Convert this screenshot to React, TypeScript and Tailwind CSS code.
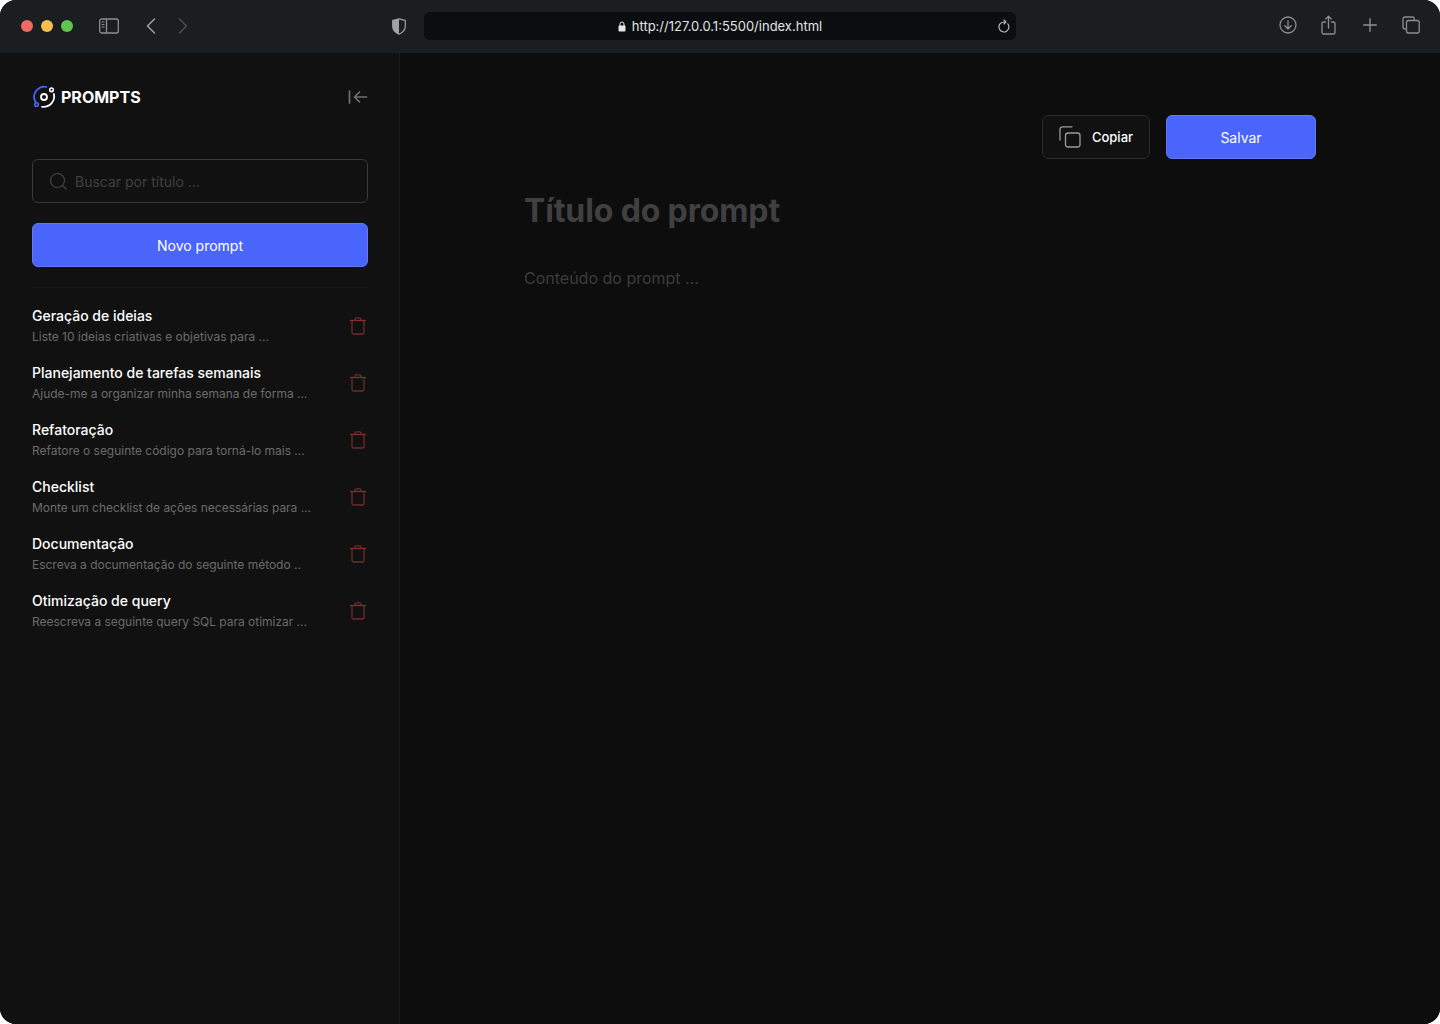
const items = [
  ["Geração de ideias", "Liste 10 ideias criativas e objetivas para ..."],
  ["Planejamento de tarefas semanais", "Ajude-me a organizar minha semana de forma ..."],
  ["Refatoração", "Refatore o seguinte código para torná-lo mais ..."],
  ["Checklist", "Monte um checklist de ações necessárias para ..."],
  ["Documentação", "Escreva a documentação do seguinte método .."],
  ["Otimização de query", "Reescreva a seguinte query SQL para otimizar ..."],
];

function Trash() {
  return (
    <svg width="16" height="18" viewBox="0 0 16 18" fill="none" stroke="#702c2c" strokeWidth="1.300">
      <path d="M0 3.500h16" stroke="#8a2f2f" />
      <path d="M5 3.500V2a1.200 1.200 0 0 1 1.200-1.200h3.600A1.200 1.200 0 0 1 11 2v1.500" />
      <path d="M2 3.500V15.500a1.500 1.500 0 0 0 1.500 1.500h9a1.500 1.500 0 0 0 1.500-1.500V3.500" />
    </svg>
  );
}

function Logo() {
  return (
    <svg width="24" height="24" viewBox="0 0 24 24" fill="none" strokeWidth="1.800" strokeLinecap="round">
      <path d="M3.800 17.500C1 13.500 1.500 8 5 4.800 8 2 11.500 1.300 14.300 2" stroke="#4a65fb" />
      <circle cx="4.500" cy="19.500" r="1.800" stroke="#4a65fb" strokeWidth="1.600" />
      <circle cx="12" cy="12" r="3" stroke="#ffffff" />
      <path d="M21.800 9C23.500 15.500 18.500 22.500 10 21.800" stroke="#ffffff" />
      <circle cx="19.500" cy="4.800" r="1.800" stroke="#ffffff" strokeWidth="1.600" />
    </svg>
  );
}

export default function App() {
  return (
    <div className="w-[1440px] h-[1024px] bg-white">
      <div className="w-full h-full rounded-[16px] overflow-hidden flex flex-col bg-[#0d0d0d] font-['Inter',sans-serif]">
        <header className="h-[53px] shrink-0 bg-[#1a1e21] flex items-center relative pb-px">
          <div className="flex gap-2 pl-[21px]">
            <span className="w-3 h-3 rounded-full bg-[#ed6a5e]" />
            <span className="w-3 h-3 rounded-full bg-[#f4bf4f]" />
            <span className="w-3 h-3 rounded-full bg-[#61c554]" />
          </div>
          <svg className="ml-[26px]" width="20" height="16" viewBox="0 0 20 16" fill="none" stroke="#8b8f92" strokeWidth="1.300">
            <rect x="0.700" y="1" width="18.600" height="14" rx="2" />
            <path d="M7.500 1v14" />
            <path d="M2.800 4h2.700M2.800 6.500h2.700M2.800 9h2.700" strokeWidth="1" />
          </svg>
          <svg className="ml-[27px]" width="10" height="16" viewBox="0 0 10 16" fill="none" stroke="#a0a3a5" strokeWidth="1.500" strokeLinecap="round" strokeLinejoin="round">
            <path d="M8.500 1 1.500 8l7 7" />
          </svg>
          <svg className="ml-[22px]" width="10" height="16" viewBox="0 0 10 16" fill="none" stroke="#4a4e51" strokeWidth="1.500" strokeLinecap="round" strokeLinejoin="round">
            <path d="M1.500 1l7 7-7 7" />
          </svg>
          <svg className="ml-[204px]" width="14" height="17" viewBox="0 0 14 17" fill="none">
            <path d="M7 .8 13.300 2.500V8c0 4-2.600 6.600-6.300 8.200C3.300 14.600.7 12 .7 8V2.500L7 .8Z" stroke="#a0a3a5" strokeWidth="1.200" />
            <path d="M7 .8V16.200C3.300 14.600.7 12 .7 8V2.500L7 .8Z" fill="#a0a3a5" />
          </svg>
          <div className="ml-[18px] w-[592px] h-[28px] rounded-md bg-[#0b0e10] flex items-center justify-center relative">
            <svg className="mr-[6px]" width="8" height="11" viewBox="0 0 8 11" fill="none">
              <path d="M2 5V3a2 2 0 0 1 4 0v2" stroke="#e5e5e5" strokeWidth="1" />
              <rect x="0.500" y="4.500" width="7" height="6" rx="1" fill="#e5e5e5" />
            </svg>
            <span className="text-[13px] text-[#e2e3e4] leading-none pt-px">http://127.0.0.1:5500/index.html</span>
            <svg className="absolute right-[6px] top-[7px]" width="12" height="14" viewBox="0 0 12 14" fill="none" stroke="#c4c6c7" strokeWidth="1.100" strokeLinecap="round">
              <path d="M9.800 4.800A5 5 0 1 1 5.500 3h2" />
              <path d="M6 .8 8 3 6 5" />
            </svg>
          </div>
          <div className="absolute right-[9px] top-[15px] h-[20px] flex items-center">
            <div className="w-[41px] flex justify-center">
              <svg width="18" height="18" viewBox="0 0 18 18" fill="none" stroke="#8b8f92" strokeWidth="1.300" strokeLinecap="round" strokeLinejoin="round">
                <circle cx="9" cy="9" r="8" />
                <path d="M9 4.800v8M5.800 9.800 9 13l3.200-3.200" />
              </svg>
            </div>
            <div className="w-[41px] flex justify-center">
              <svg width="15" height="20" viewBox="0 0 15 20" fill="none" stroke="#8b8f92" strokeWidth="1.300" strokeLinecap="round" strokeLinejoin="round">
                <path d="M4.500 7H2.500A1.500 1.500 0 0 0 1 8.500v9A1.500 1.500 0 0 0 2.500 19h10a1.500 1.500 0 0 0 1.500-1.500v-9A1.500 1.500 0 0 0 12.500 7h-2" />
                <path d="M7.500 13V1.500M4.800 4 7.500 1.300 10.200 4" />
              </svg>
            </div>
            <div className="w-[41px] flex justify-center">
              <svg width="14" height="14" viewBox="0 0 14 14" fill="none" stroke="#8b8f92" strokeWidth="1.400" strokeLinecap="round">
                <path d="M7 .7v12.600M.7 7h12.600" />
              </svg>
            </div>
            <div className="w-[41px] flex justify-center">
              <svg width="18" height="18" viewBox="0 0 18 18" fill="none" stroke="#8b8f92" strokeWidth="1.300">
                <path d="M3.800 13H2.800A1.800 1.800 0 0 1 1 11.200V2.800A1.800 1.800 0 0 1 2.800 1h7.700a1.800 1.800 0 0 1 1.800 1.800V4.300" />
                <rect x="4.500" y="4.500" width="12.700" height="12.500" rx="2" />
              </svg>
            </div>
          </div>
        </header>

        <div className="flex-1 flex min-h-0">
          <aside className="w-[400px] shrink-0 bg-[#111111] border-r border-[#1c1c1c] pl-8 pr-[31px] pt-8">
            <div className="flex items-center justify-between h-6">
              <div className="flex items-center gap-[5px]">
                <Logo />
                <span className="text-white font-bold text-base leading-none">PROMPTS</span>
              </div>
              <svg width="20" height="14" viewBox="0 0 20 14" fill="none" stroke="#6f6f6f" strokeWidth="1.700" strokeLinecap="round" strokeLinejoin="round">
                <path d="M1.500 1v12M18.500 7H6.500M11.500 2 6.500 7l5 5" />
              </svg>
            </div>
            <div className="mt-[50px] h-11 rounded-md border border-[#3a3a3a] flex items-center pl-[17px]">
              <svg width="17" height="17" viewBox="0 0 17 17" fill="none" stroke="#444444" strokeWidth="1.200" strokeLinecap="round">
                <circle cx="7.500" cy="7.500" r="7" />
                <path d="M12.500 12.500 16 16" />
              </svg>
              <span className="ml-[8px] pt-px text-sm text-[#404040]">Buscar por título ...</span>
            </div>
            <button className="mt-5 w-full h-11 rounded-md bg-[#4a65fb] border border-[#6478f0] text-white text-sm font-normal pt-px">Novo prompt</button>
            <div className="mt-5 h-px bg-[#181818]" />
            <ul className="mt-[15px] flex flex-col gap-[11px]">
              {items.map(([t, d]) => (
                <li key={t} className="h-[46px] flex items-center justify-between">
                  <div>
                    <div className="text-sm font-medium text-white leading-[20px]">{t}</div>
                    <div className="mt-[2px] text-xs tracking-[-0.02px] text-[#6b6b6b] leading-[18px]">{d}</div>
                  </div>
                  <div className="mr-[2px] -mt-[1px]"><Trash /></div>
                </li>
              ))}
            </ul>
          </aside>

          <main className="flex-1 bg-[#0d0d0d] pt-[62px] pl-[124px] pr-[124px]">
            <div className="flex justify-end gap-4">
              <button className="w-[108px] h-11 rounded-md bg-[#111111] border border-[#2a2a2a] flex items-center justify-center gap-[11px] text-[13px] font-medium text-white">
                <svg width="22" height="22" viewBox="0 0 22 22" fill="none" stroke="#9a9a9a" strokeWidth="1.300">
                  <path d="M1 14V3A2.500 2.500 0 0 1 3.500 .8h9.500" strokeLinecap="round" />
                  <rect x="6.500" y="7" width="14.500" height="14" rx="2.500" />
                </svg>
                <span className="pt-px">Copiar</span>
              </button>
              <button className="w-[150px] h-11 rounded-md bg-[#4a65fb] border border-[#6478f0] text-white text-sm font-normal pt-px">Salvar</button>
            </div>
            <h1 className="mt-[32px] text-[32px] leading-[40px] font-bold tracking-[-0.13px] text-[#404040]">Título do prompt</h1>
            <p className="mt-[35px] text-base leading-[24px] text-[#3c3c3c]">Conteúdo do prompt ...</p>
          </main>
        </div>
      </div>
    </div>
  );
}
